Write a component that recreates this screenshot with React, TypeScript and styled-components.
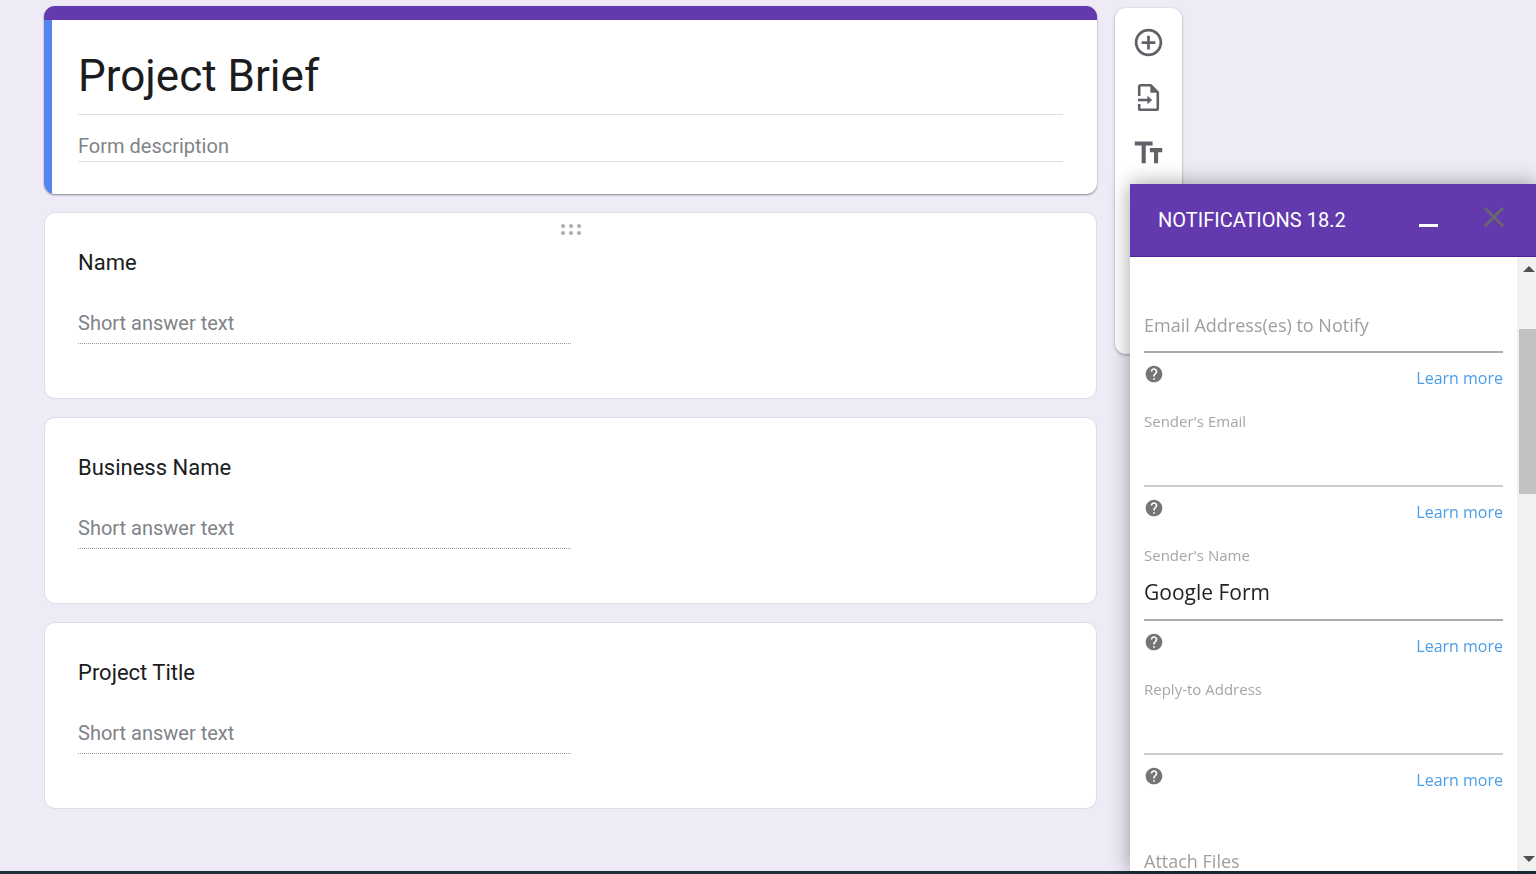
import React from 'react';
import styled, { createGlobalStyle } from 'styled-components';
import { MdAddCircleOutline, MdHelp, MdOutlineImage, MdOutlineSmartDisplay, MdOutlineSplitscreen } from 'react-icons/md';

const GlobalStyle = createGlobalStyle`
  * { box-sizing: border-box; }
  body {
    margin: 0;
    background: #eeebf6;
    font-family: Roboto, "Liberation Sans", sans-serif;
    color: #1b1c20;
  }
  input, button { font: inherit; color: inherit; }
`;

const Page = styled.div`
  min-height: 100vh;
  display: flex;
  flex-direction: column;
`;

const Editor = styled.main`
  flex: 1;
  display: flex;
  align-items: flex-start;
  gap: 18px;
  padding: 6px 354px 61px 44px;
`;

const Form = styled.form`
  flex: 1;
  min-width: 0;
  display: flex;
  flex-direction: column;
  gap: 18px;
`;

const TitleCard = styled.section`
  background: #fff;
  border-radius: 11px;
  border-top: 14px solid #623aae;
  overflow: hidden;
  box-shadow: 0 1px 2px rgba(60, 60, 70, 0.6);
`;

const TitleBody = styled.div`
  display: flex;
  flex-direction: column;
  gap: 16px;
  padding: 16px 34px 32px 26px;
  border-left: 8px solid #5484ec;
`;

const LineInput = styled.input<{ $large?: boolean }>`
  width: 100%;
  height: ${(p) => (p.$large ? 79 : 31)}px;
  padding: ${(p) => (p.$large ? 2 : 0)}px 0 0;
  border: 0;
  border-bottom: 1px solid #dfe0e3;
  background: transparent;
  outline: none;
  font-size: ${(p) => (p.$large ? 44 : 20)}px;
  &::placeholder { color: #7f8388; opacity: 1; }
`;

const QuestionCard = styled.section`
  position: relative;
  display: flex;
  flex-direction: column;
  gap: 26px;
  padding: 36px 33px 54px;
  background: #fff;
  border: 1px solid #dcdce4;
  border-radius: 11px;
`;

const QuestionLabel = styled.label`
  font-size: 22px;
  line-height: 28px;
`;

const AnswerInput = styled.input`
  width: 50%;
  height: 41px;
  padding: 0;
  border: 0;
  border-bottom: 1px dotted #9a9a9e;
  background: transparent;
  outline: none;
  font-size: 20px;
  &::placeholder { color: #7f8388; opacity: 1; }
`;

const DragHandle = styled.svg`
  position: absolute;
  top: 10px;
  left: 50%;
  margin-left: -11px;
  fill: #aeb0b3;
`;

const Toolbar = styled.nav`
  display: flex;
  flex-direction: column;
  width: 67px;
  margin-top: 2px;
  padding: 7px 0 9px;
  background: #fff;
  border-radius: 11px;
  box-shadow: 0 1px 3px rgba(60, 60, 70, 0.45);
`;

const IconButton = styled.button`
  display: flex;
  align-items: center;
  justify-content: center;
  height: 55px;
  padding: 0;
  border: 0;
  background: none;
  color: #5f6368;
  cursor: pointer;
`;

const Panel = styled.aside`
  position: fixed;
  top: 184px;
  right: 0;
  bottom: 3px;
  width: 406px;
  display: flex;
  flex-direction: column;
  background: #fff;
  box-shadow: 0 0 20px rgba(0, 0, 0, 0.38);
`;

const PanelHeader = styled.header`
  flex: none;
  display: flex;
  align-items: center;
  height: 73px;
  padding: 0 32px 0 28px;
  background: #623aae;
  border-bottom: 1px solid #4f219c;
  color: #fff;
`;

const PanelTitle = styled.h2`
  flex: 1;
  margin: 0;
  font-size: 20px;
  font-weight: 400;
`;

const HeaderButtons = styled.div`
  display: flex;
  gap: 45px;
  padding-bottom: 6px;
  button { height: 20px; }
`;

const PanelBody = styled.div`
  flex: 1;
  min-height: 0;
  display: flex;
  font-family: "Open Sans", "Noto Sans", sans-serif;
`;

const Fields = styled.div`
  flex: 1;
  overflow: hidden;
  padding: 20px 14px 0;
`;

const Field = styled.div`
  display: flex;
  flex-direction: column;
`;

const FieldLabel = styled.label<{ $hidden?: boolean }>`
  height: 20px;
  font-size: 15px;
  line-height: 20px;
  color: #a6a6a6;
  visibility: ${(p) => (p.$hidden ? 'hidden' : 'visible')};
`;

const FieldInput = styled.input<{ $faded?: boolean }>`
  width: 100%;
  height: 56px;
  padding: 0;
  border: 0;
  border-bottom: 2px solid ${(p) => (p.$faded ? '#cdcdcd' : '#acacac')};
  background: transparent;
  outline: none;
  font-size: 21px;
  color: #222;
  &::placeholder { color: #9e9e9e; opacity: 1; font-size: 18px; }
`;

const FieldFooter = styled.div`
  display: flex;
  align-items: flex-start;
  justify-content: space-between;
  height: 58px;
  padding-top: 11px;
  color: #757575;
`;

const LearnMore = styled.a`
  font-size: 16px;
  line-height: 28px;
  color: #4a9de6;
  text-decoration: none;
`;

const ScrollTrack = styled.div`
  display: flex;
  flex-direction: column;
  align-items: flex-end;
  width: 19px;
  padding: 9px 0;
  background: #f1f1f1;
`;

const ScrollThumb = styled.div`
  width: 17px;
  height: 165px;
  margin: 57px 0 auto;
  background: #c1c1c1;
`;

const ScrollArrow = styled.svg`
  width: 14px;
  height: 6px;
  fill: #505050;
`;

const BottomBar = styled.div`
  flex: none;
  height: 3px;
  background: #1c2e38;
`;

const questions = ['Name', 'Business Name', 'Project Title'];

interface FieldSpec {
  id: string;
  label: string;
  value?: string;
  asPlaceholder?: boolean;
  faded?: boolean;
  noHelp?: boolean;
}

const fields: FieldSpec[] = [
  { id: 'notify', label: 'Email Address(es) to Notify', asPlaceholder: true },
  { id: 'sender-email', label: "Sender's Email", faded: true },
  { id: 'sender-name', label: "Sender's Name", value: 'Google Form' },
  { id: 'reply-to', label: 'Reply-to Address', faded: true },
  { id: 'attach', label: 'Attach Files', asPlaceholder: true, noHelp: true },
];

const ImportIcon = () => (
  <svg width="33" height="33" viewBox="0 0 33 33" fill="none" stroke="currentColor" strokeWidth="2.6" strokeLinejoin="round">
    <path d="M7.2 15V5.6a1.4 1.4 0 0 1 1.4-1.4h10l7.2 7.2v16a1.4 1.4 0 0 1-1.4 1.4H8.6a1.4 1.4 0 0 1-1.4-1.4V23" />
    <path d="M18.4 4v7.800h7.800z" fill="currentColor" stroke="none" />
    <path d="M6 19h11" />
    <path d="M15.400 14.800 20.200 19l-4.800 4.200z" fill="currentColor" stroke="none" />
  </svg>
);

const TextIcon = () => (
  <svg width="33" height="33" viewBox="0 0 24 24" fill="currentColor">
    <path d="M2 4v2.900h5v12.900h3V6.900h5V4zM22 8.800h-9v3h3v8h3v-8h3z" />
  </svg>
);

export default function App() {
  return (
    <>
      <GlobalStyle />
      <Page>
        <Editor>
          <Form>
            <TitleCard>
              <TitleBody>
                <LineInput $large aria-label="Form title" defaultValue="Project Brief" />
                <LineInput aria-label="Form description" placeholder="Form description" />
              </TitleBody>
            </TitleCard>
            {questions.map((q, i) => (
              <QuestionCard key={q}>
                {i === 0 && (
                  <DragHandle width="22" height="14" viewBox="0 0 22 14" aria-hidden="true">
                    {[3, 10].map((y) => [3, 11, 19].map((x) => <circle key={`${x}-${y}`} cx={x} cy={y} r="2.1" />))}
                  </DragHandle>
                )}
                <QuestionLabel htmlFor={`q${i}`}>{q}</QuestionLabel>
                <AnswerInput id={`q${i}`} placeholder="Short answer text" />
              </QuestionCard>
            ))}
          </Form>
          <Toolbar>
            <IconButton aria-label="Add question"><MdAddCircleOutline size={33} /></IconButton>
            <IconButton aria-label="Import questions"><ImportIcon /></IconButton>
            <IconButton aria-label="Add title and description"><TextIcon /></IconButton>
            <IconButton aria-label="Add image"><MdOutlineImage size={33} /></IconButton>
            <IconButton aria-label="Add video"><MdOutlineSmartDisplay size={33} /></IconButton>
            <IconButton aria-label="Add section"><MdOutlineSplitscreen size={33} /></IconButton>
          </Toolbar>
        </Editor>
        <BottomBar />
      </Page>
      <Panel>
        <PanelHeader>
          <PanelTitle>NOTIFICATIONS 18.2</PanelTitle>
          <HeaderButtons>
            <IconButton aria-label="Minimize">
              <svg width="20" height="20" viewBox="0 0 20 20"><path d="M0 18.500h19" stroke="#fff" strokeWidth="3" /></svg>
            </IconButton>
            <IconButton aria-label="Close">
              <svg width="20" height="20" viewBox="0 0 20 20"><path d="M1 1l18 18M19 1 1 19" stroke="#66676f" strokeWidth="3" /></svg>
            </IconButton>
          </HeaderButtons>
        </PanelHeader>
        <PanelBody>
          <Fields>
            {fields.map((f) => (
              <Field key={f.id}>
                <FieldLabel htmlFor={f.id} $hidden={f.asPlaceholder}>{f.label}</FieldLabel>
                <FieldInput
                  id={f.id}
                  $faded={f.faded}
                  defaultValue={f.value}
                  placeholder={f.asPlaceholder ? f.label : undefined}
                />
                {!f.noHelp && (
                  <FieldFooter>
                    <MdHelp size={20} />
                    <LearnMore href="#">Learn more</LearnMore>
                  </FieldFooter>
                )}
              </Field>
            ))}
          </Fields>
          <ScrollTrack>
            <ScrollArrow viewBox="0 0 14 6"><path d="M1 6 7 0l6 6z" /></ScrollArrow>
            <ScrollThumb />
            <ScrollArrow viewBox="0 0 14 6"><path d="M1 0h12L7 6z" /></ScrollArrow>
          </ScrollTrack>
        </PanelBody>
      </Panel>
    </>
  );
}
